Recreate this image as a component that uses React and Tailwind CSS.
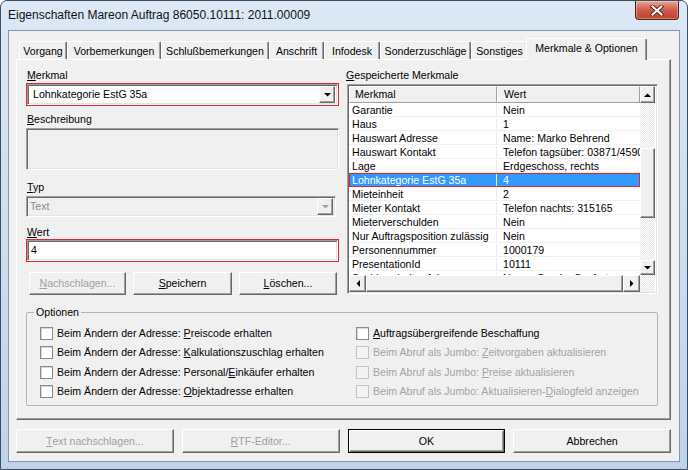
import React from 'react';

const raised = 'bg-[#f0f0f0] border border-t-white border-l-white border-r-[#696969] border-b-[#696969] shadow-[inset_-1px_-1px_0_#a0a0a0]';
const sunken = 'border border-t-[#a0a0a0] border-l-[#a0a0a0] border-r-white border-b-white shadow-[inset_1px_1px_0_#696969,inset_-1px_-1px_0_#e3e3e3]';
const checker = 'bg-[repeating-conic-gradient(#ffffff_0%_25%,#e4e4e4_0%_50%)] bg-[length:2px_2px]';

const U = ({ children }) => <span className="underline underline-offset-[1px]">{children}</span>;

function Tri({ dir = 'down', color = '#000' }) {
  if (dir === 'left' || dir === 'right') {
    const pts = dir === 'left' ? '4,0 4,7 0.5,3.5' : '0,0 0,7 3.5,3.5';
    return (
      <svg width="4" height="7" viewBox="0 0 4 7">
        <polygon points={pts} fill={color} />
      </svg>
    );
  }
  const pts = dir === 'up' ? '0,4 7,4 3.5,0.5' : '0,0 7,0 3.5,3.5';
  return (
    <svg width="7" height="4" viewBox="0 0 7 4">
      <polygon points={pts} fill={color} />
    </svg>
  );
}

function Btn({ children, disabled, className = '' }) {
  return (
    <div className={`${raised} flex items-center justify-center ${disabled ? 'text-[#a0a0a0]' : ''} ${className}`}>
      {children}
    </div>
  );
}

function Check({ children, disabled }) {
  return (
    <div className="flex items-center gap-[4px] h-[19.33px] whitespace-nowrap">
      <span
        className={
          disabled
            ? 'w-[13px] h-[13px] shrink-0 border border-[#c4c4c4] bg-[#f3f3f3]'
            : 'w-[13px] h-[13px] shrink-0 border border-[#8a8a8a] bg-white shadow-[inset_1px_1px_0_#d8d8d8]'
        }
      />
      <span className={disabled ? 'text-[#a3a3a3]' : ''}>{children}</span>
    </div>
  );
}

const tabs = [
  ['Vorgang', 48],
  ['Vorbemerkungen', 94],
  ['Schlußbemerkungen', 108],
  ['Anschrift', 55],
  ['Infodesk', 56],
  ['Sonderzuschläge', 91],
  ['Sonstiges', 57],
];

const rows = [
  ['Garantie', 'Nein'],
  ['Haus', '1'],
  ['Hauswart Adresse', 'Name: Marko Behrend'],
  ['Hauswart Kontakt', 'Telefon tagsüber: 03871/4590'],
  ['Lage', 'Erdgeschoss, rechts'],
  ['Lohnkategorie EstG 35a', '4', true],
  ['Mieteinheit', '2'],
  ['Mieter Kontakt', 'Telefon nachts: 315165'],
  ['Mieterverschulden', 'Nein'],
  ['Nur Auftragsposition zulässig', 'Nein'],
  ['Personennummer', '1000179'],
  ['PresentationId', '10111'],
  ['Sachbearbeiter Adresse', 'Name: Sandra Seufert'],
];

export default function App() {
  return (
    <div className="w-[688px] h-[470px] overflow-hidden font-['Liberation_Sans',Arial,sans-serif] text-[10.6px] leading-[13px] text-black">
      <div className="w-full h-full flex flex-col rounded-t-[7px] border border-[#3e4d5f] bg-gradient-to-b from-[#dce8f6] via-[#cddef0] to-[#bed3ea]">
        {/* title bar */}
        <div className="h-[29px] shrink-0 flex items-start">
          <div className="pl-[7px] pt-[7px] text-[12px] leading-[14px] text-[#111]">
            Eigenschaften Mareon Auftrag 86050.10111: 2011.00009
          </div>
          <div className="ml-auto mr-[8px] w-[44px] h-[19px] rounded-b-[4px] border border-t-0 border-[#4d1f1a] bg-gradient-to-b from-[#e6a595] via-[#cf5a48] to-[#c0432e] shadow-[inset_0_0_0_1px_rgba(255,255,255,0.35)] flex items-center justify-center">
            <svg width="14" height="11" viewBox="0 0 14 11">
              <path d="M2.5 1.5 L11.5 9.5 M11.5 1.5 L2.5 9.5" stroke="#5a2a22" strokeWidth="4" strokeLinecap="square" />
              <path d="M2.5 1.5 L11.5 9.5 M11.5 1.5 L2.5 9.5" stroke="#ffffff" strokeWidth="2" strokeLinecap="square" />
            </svg>
          </div>
        </div>

        {/* client area */}
        <div className="mx-[7px] h-[432px] border border-[#8697ab] bg-[#f0f0f0] pl-[7px] pr-[6px] pt-[7px] flex flex-col">
          {/* tab strip */}
          <div className="h-[22px] flex items-end pl-[3px]">
            {tabs.map(([t, w]) => (
              <div
                key={t}
                style={{ width: w }}
                className="h-[18px] mb-[1px] pt-[1px] flex items-center justify-center border-t border-l border-white border-r border-r-[#696969] rounded-t-[2px] shadow-[inset_-1px_0_0_#a0a0a0] bg-[#f0f0f0]"
              >
                {t}
              </div>
            ))}
            <div className="relative z-10 -mx-[2px] w-[121px] h-[22px] pb-[3px] flex items-center justify-center border-t border-l border-white border-r border-r-[#696969] rounded-t-[2px] shadow-[inset_-1px_0_0_#a0a0a0] bg-[#f0f0f0]">
              Merkmale &amp; Optionen
            </div>
          </div>

          {/* tab panel */}
          <div className={`-mt-[1px] h-[361px] w-[655px] ${raised} pl-[9px] pt-[9px] flex flex-col`}>
            <div className="flex h-[226px]">
              {/* left column */}
              <div className="w-[313px] flex flex-col">
                <div className="h-[13px] pl-[1px]"><U>M</U>erkmal</div>
                <div className="mt-[1px] h-[23px] border border-[#e0262e]">
                  <div className={`h-full ${sunken} bg-white flex items-center pl-[5px] pr-[2px]`}>
                    <span className="flex-1">Lohnkategorie EstG 35a</span>
                    <div className={`${raised} w-[16px] h-[17px] flex items-center justify-center`}>
                      <Tri />
                    </div>
                  </div>
                </div>
                <div className="mt-[7px] h-[13px] pl-[1px]"><U>B</U>eschreibung</div>
                <div className={`mt-[2px] h-[42px] ${sunken} bg-[#f0f0f0]`} />
                <div className="mt-[11px] h-[13px] pl-[1px]"><U>T</U>yp</div>
                <div className={`mt-[2px] h-[21px] w-[310px] ${sunken} bg-[#f0f0f0] flex items-center pl-[3px] pr-[2px]`}>
                  <span className="flex-1 text-[#8c8c8c]">Text</span>
                  <div className={`${raised} w-[16px] h-[17px] flex items-center justify-center`}>
                    <Tri color="#a0a0a0" />
                  </div>
                </div>
                <div className="mt-[9px] h-[13px] pl-[1px]"><U>W</U>ert</div>
                <div className="h-[23px] border border-[#e0262e]">
                  <div className={`h-full ${sunken} bg-white flex items-center pl-[3px]`}>4</div>
                </div>
                <div className="mt-[10px] h-[23px] flex gap-[7px] pl-[3px]">
                  <Btn disabled className="w-[97px]"><U>N</U>achschlagen...</Btn>
                  <Btn className="w-[99px]"><U>S</U>peichern</Btn>
                  <Btn className="w-[98px]"><U>L</U>öschen...</Btn>
                </div>
              </div>

              {/* right column */}
              <div className="ml-[7px] w-[311px] flex flex-col">
                <div className="h-[13px]"><U>G</U>espeicherte Merkmale</div>
                <div className={`mt-[2px] ml-[1px] w-[311px] h-[210px] ${sunken} bg-white p-[1px] flex`}>
                  <div className="w-[291px] flex flex-col">
                    {/* header */}
                    <div className="h-[17px] flex shrink-0">
                      <div className="w-[148px] pl-[5px] flex items-center bg-[#f0f0f0] border border-t-white border-l-white border-r-[#a0a0a0] border-b-[#a0a0a0]">Merkmal</div>
                      <div className="flex-1 pl-[6px] flex items-center bg-[#f0f0f0] border border-t-white border-l-white border-r-[#a0a0a0] border-b-[#a0a0a0]">Wert</div>
                    </div>
                    {/* body */}
                    <div className="h-[172px] overflow-hidden">
                      {rows.map(([k, v, sel]) => (
                        <div
                          key={k}
                          className={
                            sel
                              ? 'h-[14px] pt-[1px] flex bg-[#3399ff] text-white outline outline-1 -outline-offset-1 outline-[#e0262e]'
                              : 'h-[14px] pt-[1px] flex border-b border-[#f0f0f0]'
                          }
                        >
                          <div className="w-[148px] pl-[3px] whitespace-nowrap overflow-hidden border-r border-[#ececec] flex items-center">{k}</div>
                          <div className="flex-1 pl-[6px] whitespace-nowrap overflow-hidden flex items-center">{v}</div>
                        </div>
                      ))}
                    </div>
                    {/* horizontal scrollbar */}
                    <div className="h-[17px] flex">
                      <div className={`${raised} w-[17px] flex items-center justify-center`}><Tri dir="left" /></div>
                      <div className={`${raised} flex-1`} />
                      <div className={`${raised} w-[17px] flex items-center justify-center`}><Tri dir="right" /></div>
                    </div>
                  </div>
                  {/* vertical scrollbar */}
                  <div className="w-[15px] flex flex-col">
                    <div className={`${raised} h-[17px] flex items-center justify-center`}><Tri dir="up" /></div>
                    <div className={`h-[157px] ${checker} flex flex-col`}>
                      <div className={`${raised} mt-[45px] h-[70px]`} />
                    </div>
                    <div className={`${raised} h-[15px] flex items-center justify-center`}><Tri /></div>
                    <div className={`h-[17px] ${checker}`} />
                  </div>
                </div>
              </div>
            </div>

            {/* options group */}
            <fieldset className="mt-[11px] w-[632px] h-[100px] border border-[#b4b4b4] rounded-[2px]">
              <legend className="ml-[7px] px-[2px] leading-[13px]">Optionen</legend>
              <div className="pt-[5px] pl-[13px] grid grid-cols-[316px_1fr]">
                <div className="flex flex-col">
                  <Check>Beim Ändern der Adresse: <U>P</U>reiscode erhalten</Check>
                  <Check>Beim Ändern der Adresse: <U>K</U>alkulationszuschlag erhalten</Check>
                  <Check>Beim Ändern der Adresse: Personal/<U>E</U>inkäufer erhalten</Check>
                  <Check>Beim Ändern der Adresse: <U>O</U>bjektadresse erhalten</Check>
                </div>
                <div className="flex flex-col">
                  <Check><U>A</U>uftragsübergreifende Beschaffung</Check>
                  <Check disabled>Beim Abruf als Jumbo: <U>Z</U>eitvorgaben aktualisieren</Check>
                  <Check disabled>Beim Abruf als Jumbo: <U>P</U>reise aktualisieren</Check>
                  <Check disabled>Beim Abruf als Jumbo: Aktualisieren-<U>D</U>ialogfeld anzeigen</Check>
                </div>
              </div>
            </fieldset>
          </div>

          {/* dialog buttons */}
          <div className="mt-[9px] h-[24px] w-[655px] grid grid-cols-4 gap-[8px]">
            <Btn disabled><U>T</U>ext nachschlagen...</Btn>
            <Btn disabled><U>R</U>TF-Editor...</Btn>
            <div className="border border-black flex">
              <Btn className="flex-1">OK</Btn>
            </div>
            <Btn>Abbrechen</Btn>
          </div>
        </div>
      </div>
    </div>
  );
}
